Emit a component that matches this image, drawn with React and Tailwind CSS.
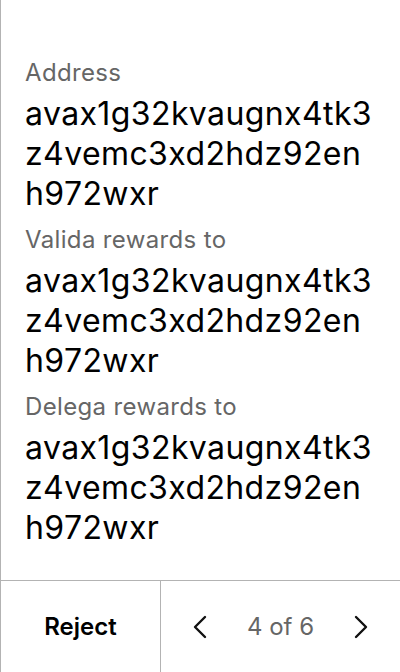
const ADDRESS = ["avax1g32kvaugnx4tk3", "z4vemc3xd2hdz92en", "h972wxr"];

const fields = [
  { label: "Address", value: ADDRESS },
  { label: "Valida rewards to", value: ADDRESS },
  { label: "Delega rewards to", value: ADDRESS },
];

const Chevron = ({ dir }) => (
  <svg width="16" height="24" viewBox="0 0 16 24" fill="none">
    <polyline
      points={dir === "left" ? "13,2 3,12 13,22" : "3,2 13,12 3,22"}
      stroke="#111"
      strokeWidth="2.4"
      strokeLinecap="round"
      strokeLinejoin="round"
    />
  </svg>
);

const App = () => {
  return (
    <div
      className="w-[400px] h-[672px] bg-white border-l border-[#b3b3b3] flex flex-col"
      style={{ fontFamily: "Inter, 'Noto Sans', sans-serif" }}
    >
      <div className="flex-1 pt-[57px] pl-6 pr-2 flex flex-col gap-[10px]">
        {fields.map((f) => (
          <div key={f.label} className="flex flex-col">
            <div className="text-[24px] leading-[32px] tracking-[0.35px] text-[#666]">{f.label}</div>
            <div className="mt-[5px] text-[32px] leading-[40px] tracking-[0.4px] text-black">
              {f.value.map((line) => (
                <div key={line}>{line}</div>
              ))}
            </div>
          </div>
        ))}
      </div>
      <div className="h-[92px] border-t border-[#b3b3b3] flex">
        <button className="w-[160px] border-r border-[#b3b3b3] flex items-center justify-center text-[24px] font-semibold text-black">
          Reject
        </button>
        <div className="flex-1 flex items-center justify-between px-[31px]">
          <Chevron dir="left" />
          <span className="text-[24px] text-[#666]">4 of 6</span>
          <Chevron dir="right" />
        </div>
      </div>
    </div>
  );
};

export default App;
